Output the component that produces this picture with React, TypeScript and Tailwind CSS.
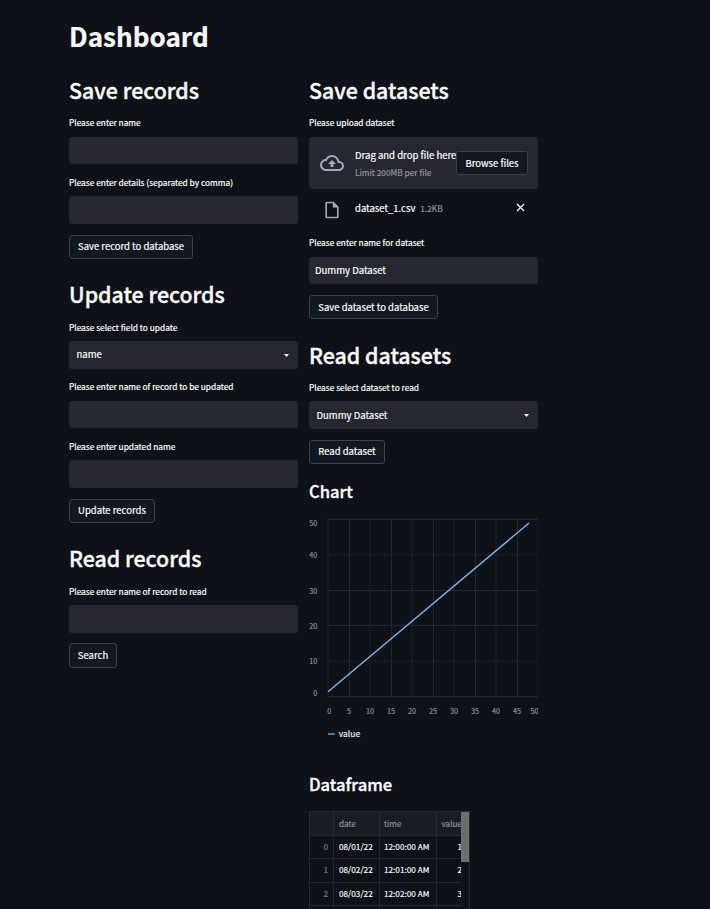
import type { ReactNode } from 'react';

const Title = ({ children, className = '' }: { children: ReactNode; className?: string }) => (
  <h2
    className={`h-[30px] whitespace-nowrap text-[21.35px] font-medium leading-[28px] [-webkit-text-stroke:0.35px] ${className}`}
  >
    {children}
  </h2>
);

const Subtitle = ({ children, className = '' }: { children: ReactNode; className?: string }) => (
  <h3 className={`h-6 text-[16.6px] font-medium leading-[22px] [-webkit-text-stroke:0.35px] ${className}`}>{children}</h3>
);

const Label = ({ children, className = '' }: { children: ReactNode; className?: string }) => (
  <div className={`h-[14px] whitespace-nowrap text-[8.33px] leading-[12px] [-webkit-text-stroke:0.2px] ${className}`}>
    {children}
  </div>
);

const Field = ({ value, className = '' }: { value?: string; className?: string }) => (
  <div
    className={`flex items-center rounded-[3px] bg-[#262730] px-[6px] text-[9.55px] [-webkit-text-stroke:0.2px] ${className}`}
  >
    {value}
  </div>
);

const Select = ({ value, className = '' }: { value: string; className?: string }) => (
  <div
    className={`flex h-7 items-center justify-between rounded-[3px] bg-[#262730] pl-[7.5px] pr-[9px] text-[9.55px] [-webkit-text-stroke:0.2px] ${className}`}
  >
    <span>{value}</span>
    <svg width="5" height="3" viewBox="0 0 5 3" className="mt-px">
      <path d="M0 0h5L2.5 3z" fill="#fafafa" />
    </svg>
  </div>
);

const Button = ({ children, className = '' }: { children: ReactNode; className?: string }) => (
  <button
    className={`flex items-center justify-center whitespace-nowrap rounded-[3px] border border-[#3e4147] bg-[#131720] text-[9.5px] [-webkit-text-stroke:0.2px] ${className}`}
  >
    {children}
  </button>
);

const Chart = () => (
  <svg width="229" height="260" viewBox="309 504 229 260" className="block">
    {[0, 1, 2, 3, 4, 5, 6, 7, 8, 9, 10].map((i) => (
      <line
        key={i}
        x1={328 + i * 21 + (i % 2 ? 0.5 : 0)}
        x2={328 + i * 21 + (i % 2 ? 0.5 : 0)}
        y1="519"
        y2="697"
        stroke={i % 2 ? '#25272a' : '#1e2125'}
      />
    ))}
    {[519.5, 555, 590.5, 625.5, 661, 696.5].map((y) => (
      <line key={y} x1="328" x2="538" y1={y} y2={y} stroke={y % 1 ? '#25272a' : '#1e2125'} />
    ))}
    <path d="M328 691.8L529 523" stroke="#74b5e8" strokeWidth="1.5" fill="none" />
    <g fill="#96989c" fontSize="7.2" stroke="#96989c" strokeWidth="0.15">
      {[
        ['50', 525.5],
        ['40', 558.3],
        ['30', 593.5],
        ['20', 628.7],
        ['10', 664],
        ['0', 695.5],
      ].map(([t, y]) => (
        <text key={t} x="317.3" y={y} textAnchor="end">{t}</text>
      ))}
      {[329.3, 349, 370, 391, 412, 433, 454, 475, 496, 517, 534.5].map((x, i) => (
        <text key={x} x={x} y="713.5" textAnchor="middle">{i * 5}</text>
      ))}
    </g>
    <path d="M328 734h7" stroke="#5b93c0" strokeWidth="1.6" />
    <text x="338.8" y="737" fontSize="8.5" fill="#e6e7e9" stroke="#e6e7e9" strokeWidth="0.2">value</text>
  </svg>
);

const rows = [
  ['0', '08/01/22', '12:00:00 AM', '1'],
  ['1', '08/02/22', '12:01:00 AM', '2'],
  ['2', '08/03/22', '12:02:00 AM', '3'],
];

const Dataframe = () => (
  <div className="relative mt-[14px] h-[98px] w-[161px] overflow-hidden border border-b-0 border-[#292b31] text-[8.2px] [-webkit-text-stroke:0.15px]">
    <div className="grid h-6 grid-cols-[24px_45.500px_57.500px_40px] border-b border-[#292b31] bg-[#1a1c24] leading-[23px] text-[#93959b]">
      <span className="border-r border-[#292b31]" />
      <span className="border-r border-[#292b31] pl-[5px]">date</span>
      <span className="border-r border-[#292b31] pl-[4.5px]">time</span>
      <span className="pl-[4.5px]">value</span>
    </div>
    {rows.map((r) => (
      <div
        key={r[0]}
        className="grid h-[23.4px] grid-cols-[24px_45.5px_57.5px_31px] border-b border-[#24262b] leading-[21.5px] text-[#fafafa]"
      >
        <span className="border-r border-[#24262b] pr-[5px] text-right text-[#7d7f84]">{r[0]}</span>
        <span className="whitespace-nowrap border-r border-[#24262b] pl-[5px]">{r[1]}</span>
        <span className="whitespace-nowrap border-r border-[#24262b] pl-[4.5px]">{r[2]}</span>
        <span className="pr-[6px] text-right">{r[3]}</span>
      </div>
    ))}
    <div className="grid h-3 grid-cols-[24px_45.5px_57.5px]">
      <span className="border-r border-[#24262b]" />
      <span className="border-r border-[#24262b]" />
      <span className="border-r border-[#24262b]" />
    </div>
    <div className="absolute right-0 top-0 h-full w-2 bg-[#111216]">
      <div className="h-[50px] bg-[#6d6e70]" />
    </div>
  </div>
);

export default function App() {
  return (
    <main className="h-[909px] w-full overflow-hidden bg-[#0e1117] pl-[69px] pt-5 font-['Noto_Sans_CJK_SC',sans-serif] text-[#fafafa]">
      <h1 className="h-[34px] text-[26.1px] font-bold leading-[32px] [-webkit-text-stroke:0.2px]">Dashboard</h1>
      <div className="mt-[22px] flex gap-[11px]">
        <section className="w-[229px]">
          <Title>Save records</Title>
          <Label className="mt-[10px]">Please enter name</Label>
          <Field className="mt-[7px] h-[27px]" />
          <Label className="mt-3">Please enter details (separated by comma)</Label>
          <Field className="mt-[6px] h-7" />
          <Button className="mt-[11px] h-6 w-[124px] pb-[2px]">Save record to database</Button>

          <Title className="mt-[21px]">Update records</Title>
          <Label className="mt-[11px]">Please select field to update</Label>
          <Select className="mt-[6px] pb-px" value="name" />
          <Label className="mt-[11px]">Please enter name of record to be updated</Label>
          <Field className="mt-[7px] h-[27px]" />
          <Label className="mt-3">Please enter updated name</Label>
          <Field className="mt-[6px] h-7" />
          <Button className="mt-[11px] h-6 w-[86px] pb-[2px]">Update records</Button>

          <Title className="mt-[21px]">Read records</Title>
          <Label className="mt-[11px]">Please enter name of record to read</Label>
          <Field className="mt-[6px] h-7" />
          <Button className="mt-[10px] h-[25px] w-12">Search</Button>
        </section>

        <section className="w-[229px]">
          <Title>Save datasets</Title>
          <Label className="mt-[10px]">Please upload dataset</Label>
          <div className="mt-[7px] flex h-[52px] items-center rounded-[3px] bg-[#262730] pl-[11px] pr-[10px]">
            <svg width="24" height="24" viewBox="0 0 24 24" fill="#a3a8b8" className="shrink-0">
              <path d="M19.35 10.04A7.49 7.49 0 0012 4C9.11 4 6.6 5.64 5.35 8.04A5.994 5.994 0 000 14c0 3.31 2.69 6 6 6h13c2.76 0 5-2.24 5-5 0-2.64-2.05-4.78-4.65-4.96zM19 18H6c-2.21 0-4-1.79-4-4 0-2.05 1.53-3.76 3.56-3.97l1.07-.11.5-.95A5.469 5.469 0 0112 6c2.62 0 4.88 1.86 5.39 4.43l.3 1.5 1.53.11A2.98 2.98 0 0122 15c0 1.65-1.35 3-3 3zM8 13h2.55v3h2.9v-3H16l-4-4z" />
            </svg>
            <div className="ml-[11px] w-[101px] whitespace-nowrap [-webkit-text-stroke:0.2px]">
              <div className="h-[18px] text-[9.55px] leading-[18px]">Drag and drop file here</div>
              <div className="h-[16px] text-[8.3px] leading-[16px] text-[#93949b]">Limit 200MB per file</div>
            </div>
            <Button className="h-6 w-[72px] shrink-0">Browse files</Button>
          </div>
          <div className="flex h-10 items-center pl-[12.5px] pr-[13px] [-webkit-text-stroke:0.2px]">
            <svg width="20" height="20" viewBox="0 0 24 24" fill="#a3a8b8" className="mt-px shrink-0">
              <path d="M14 2H6c-1.1 0-1.99.9-1.99 2L4 20c0 1.1.89 2 1.99 2H18c1.1 0 2-.9 2-2V8l-6-6zM6 20V4h7v5h5v11H6z" />
            </svg>
            <span className="mb-[2px] ml-[13.5px] text-[9.5px]">dataset_1.csv</span>
            <span className="mb-px ml-[5px] text-[8.3px] text-[#93949b]">1.2KB</span>
            <svg width="9" height="9" viewBox="0 0 9 9" className="mb-[3px] ml-auto" stroke="#fafafa" strokeWidth="1.2">
              <path d="M1 1l7 7M8 1L1 8" />
            </svg>
          </div>
          <Label className="mt-[7px]">Please enter name for dataset</Label>
          <Field className="mt-[7px] h-[27px]" value="Dummy Dataset" />
          <Button className="mt-[11px] h-6 w-[129px]">Save dataset to database</Button>

          <Title className="mt-[22px]">Read datasets</Title>
          <Label className="mt-[10px]">Please select dataset to read</Label>
          <Select className="mt-[6px]" value="Dummy Dataset" />
          <Button className="mt-[11px] h-6 w-[76px] pb-[2px]">Read dataset</Button>

          <Subtitle className="mt-4">Chart</Subtitle>
          <Chart />
          <Subtitle className="mt-[9px]">Dataframe</Subtitle>
          <Dataframe />
        </section>
      </div>
    </main>
  );
}
